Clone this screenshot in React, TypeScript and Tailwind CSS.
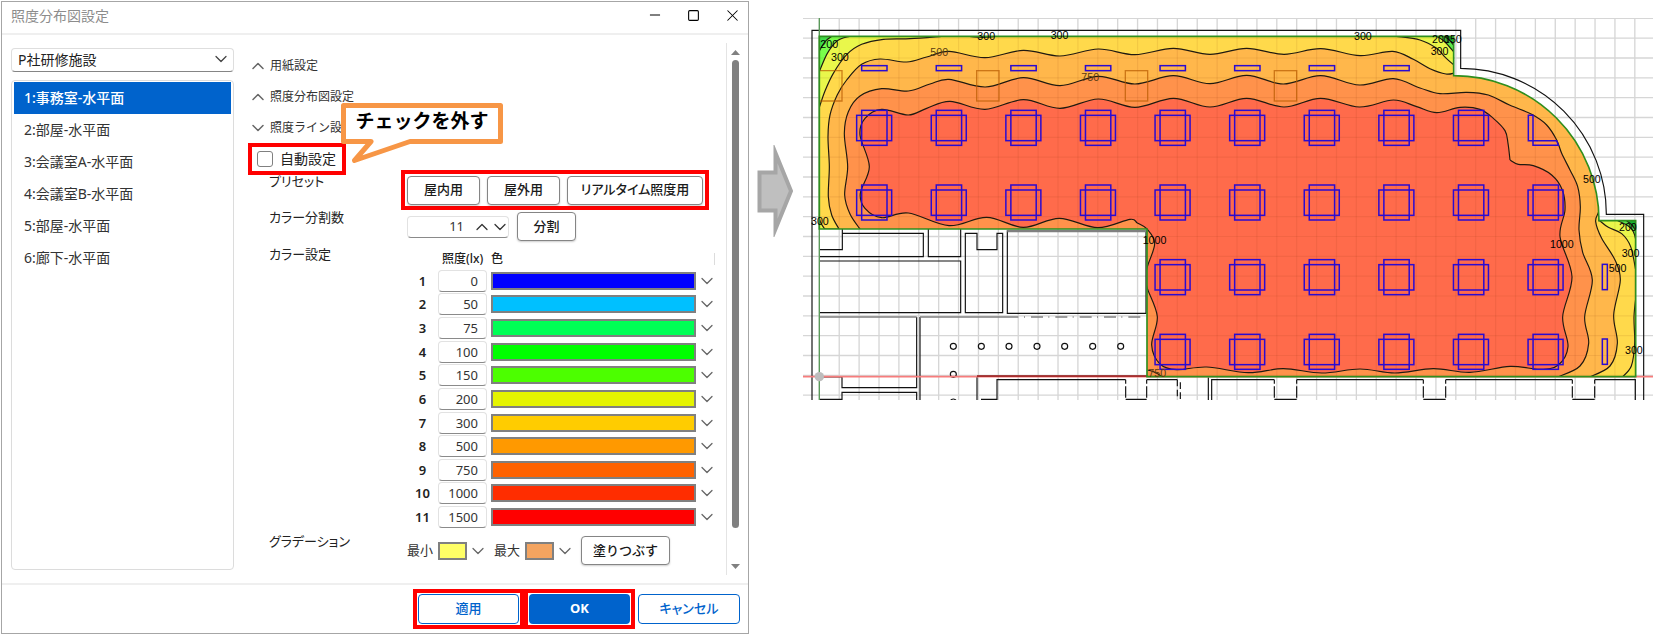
import { useState } from "react";
import { ChevronDown, ChevronUp, Minus, Square, X } from "lucide-react";

const rooms = [
  "1:事務室-水平面",
  "2:部屋-水平面",
  "3:会議室A-水平面",
  "4:会議室B-水平面",
  "5:部屋-水平面",
  "6:廊下-水平面",
];

const sections = [
  { label: "用紙設定", open: false },
  { label: "照度分布図設定", open: false },
  { label: "照度ライン設定", open: true },
];

const levels = [
  { lux: 0, color: "bg-[#0000ff]" },
  { lux: 50, color: "bg-[#00c0ff]" },
  { lux: 75, color: "bg-[#00ff55]" },
  { lux: 100, color: "bg-[#00ff00]" },
  { lux: 150, color: "bg-[#4cff00]" },
  { lux: 200, color: "bg-[#e5f400]" },
  { lux: 300, color: "bg-[#ffcc00]" },
  { lux: 500, color: "bg-[#ff9900]" },
  { lux: 750, color: "bg-[#ff6200]" },
  { lux: 1000, color: "bg-[#ff2d00]" },
  { lux: 1500, color: "bg-[#ff0000]" },
];

const outlineButton =
  "h-[29px] rounded-[4px] border border-[#858585] bg-white text-[13px] font-medium text-[#1a1a1a] shadow-[0_1px_2px_rgba(0,0,0,0.2)]";
const fieldBox =
  "rounded-[4px] border border-[#e2e2e2] border-b-[#8a8a8a] bg-white text-[13px] text-[#333]";

type Point = [number, number];

// Smooth curve that passes through every point
function smooth(points: Point[]) {
  let d = `${points[0][0]} ${points[0][1]}`;
  for (let i = 0; i < points.length - 1; i++) {
    const p0 = points[i - 1] ?? points[i];
    const p1 = points[i];
    const p2 = points[i + 1];
    const p3 = points[i + 2] ?? p2;
    const c1 = [p1[0] + (p2[0] - p0[0]) / 6, p1[1] + (p2[1] - p0[1]) / 6];
    const c2 = [p2[0] - (p3[0] - p1[0]) / 6, p2[1] - (p3[1] - p1[1]) / 6];
    d += ` C${c1[0]} ${c1[1]} ${c2[0]} ${c2[1]} ${p2[0]} ${p2[1]}`;
  }
  return d;
}

const line500Top = smooth([
  [267, 657], [245, 615], [235, 560], [238, 470], [234, 380], [240, 315], [262, 254], [290, 210],
  [335, 163], [390, 147], [470, 156], [530, 141], [597, 124], [705, 143], [820, 121], [930, 138],
  [1045, 117], [1155, 134], [1270, 115], [1380, 133], [1490, 115], [1602, 133], [1712, 116],
  [1830, 137], [1928, 124], [1990, 148], [2040, 176], [2088, 192], [2113, 189],
]);
const line500Right = smooth([
  [2546, 606], [2537, 635], [2555, 685], [2595, 750], [2611, 810], [2591, 915], [2602, 1000],
  [2580, 1068], [2516, 1102],
]);
const line750 = smooth([
  [332, 660], [300, 612], [284, 555], [293, 470], [283, 370], [295, 305], [330, 258], [395, 236],
  [475, 243], [540, 222], [597, 208], [706, 231], [820, 203], [930, 227], [1045, 199], [1155, 222],
  [1270, 197], [1380, 221], [1490, 196], [1600, 222], [1712, 197], [1828, 225], [1930, 206],
  [2010, 234], [2070, 251], [2150, 247], [2215, 255], [2280, 286], [2345, 313], [2390, 345],
  [2420, 390], [2435, 430], [2460, 480], [2483, 530], [2491, 590], [2487, 660], [2498, 727],
  [2527, 810], [2504, 920], [2516, 1000], [2490, 1068], [2420, 1102],
]);
const line1000 = smooth([
  [2280, 450], [2305, 463], [2350, 467], [2405, 495], [2437, 540], [2445, 600], [2430, 680],
  [2466, 800], [2438, 920], [2454, 1010], [2425, 1065], [2370, 1078], [2280, 1069], [2160, 1087],
  [2050, 1076], [1935, 1089], [1830, 1077], [1715, 1089], [1600, 1076], [1495, 1088], [1370, 1071],
  [1280, 1079], [1230, 1062], [1205, 1005], [1222, 920], [1192, 835], [1186, 802], [1192, 770],
  [1214, 700], [1191, 657], [1162, 639], [1140, 628], [1043, 653], [928, 625], [820, 652],
  [710, 622], [597, 647], [475, 609], [395, 623], [345, 595], [331, 550], [358, 470], [330, 375],
  [345, 325], [395, 298], [475, 315], [530, 295], [600, 274], [705, 298], [820, 269], [930, 295],
  [1045, 267], [1155, 292], [1270, 265], [1380, 291], [1490, 265], [1602, 291], [1712, 265],
  [1828, 291], [1930, 270], [2000, 290], [2060, 308], [2130, 292], [2190, 298], [2230, 325],
  [2265, 362], [2274, 400], [2280, 450],
]);

const roomOutline = "M208 79H2111V197A435 435 0 0 1 2547 632H2657V1100H1191V657H208Z";

const fixtureColumns = [0, 1, 2, 3, 4, 5, 6, 7, 8, 9];
const fixtureRows = [
  { y: 301, from: 0, to: 8 },
  { y: 525, from: 0, to: 9 },
  { y: 749, from: 4, to: 9 },
  { y: 973, from: 4, to: 9 },
];

const contourLabels = [
  { text: "200", x: 211, y: 114 },
  { text: "300", x: 243, y: 152 },
  { text: "500", x: 541, y: 138, faint: true },
  { text: "300", x: 682, y: 90 },
  { text: "300", x: 902, y: 86 },
  { text: "750", x: 994, y: 212, faint: true },
  { text: "300", x: 1812, y: 90 },
  { text: "200", x: 2046, y: 98 },
  { text: "150", x: 2082, y: 100 },
  { text: "300", x: 2042, y: 136 },
  { text: "500", x: 2499, y: 520 },
  { text: "200", x: 2607, y: 663 },
  { text: "300", x: 2615, y: 740 },
  { text: "500", x: 2576, y: 786 },
  { text: "1000", x: 2400, y: 715 },
  { text: "300", x: 2625, y: 1033 },
  { text: "300", x: 183, y: 644 },
  { text: "1000", x: 1178, y: 701 },
  { text: "750", x: 1195, y: 1102, faint: true },
];

function GridLines() {
  return (
    <>
      {Array.from({ length: 43 }, (_, i) => (
        <path key={`v${i}`} d={`M${208 + i * 59.67} 24V1170`} />
      ))}
      {Array.from({ length: 20 }, (_, i) => (
        <path key={`h${i}`} d={`M159 ${25 + i * 59.5}H2709`} />
      ))}
    </>
  );
}

function Fixture({ x, y }: { x: number; y: number }) {
  return (
    <>
      <rect x={x} y={y} width="76" height="105" />
      <rect x={x - 15} y={y + 15} width="105" height="76" />
    </>
  );
}

function FloorPlan() {
  return (
    <svg
      viewBox="159 24 2550 1146"
      className="block h-auto w-full"
      role="img"
      aria-label="照度分布図"
    >
      <defs>
        <clipPath id="room">
          <path d={roomOutline} />
        </clipPath>
      </defs>

      <g stroke="#d6d6d6" strokeWidth="4" fill="none">
        <GridLines />
      </g>

      {/* walls */}
      <g stroke="#111" strokeWidth="3.5" fill="none">
        <path d="M186 1170V61H2132V175A437 437 0 0 1 2569 613H2681V1170" />
        <path d="M277 657V719H209M277 670H520V740H209M535 657V740H632V657M209 753H632V908H209" />
        <path d="M646 670H681V719H741V670H758V908H646Z" />
        <path d="M772 661V910H1188V661" />
        <path d="M500 921V1133H276V1101H209M510 1170V921M209 1168H276V1147H500V1170" />
        <path d="M681 1170V1100M693 1168H741V1109H1127M1190 1109H1282" />
        <path d="M1385 1170V1109H1573M1640 1109H2020M2087 1109H2467M2534 1109H2656V1170" />
        <path d="M1375 1102V1170M1127 1168H1190M1573 1168H1640M2020 1168H2087M2467 1168H2534" />
        <path
          d="M1127 1109V1168M1190 1109V1168M1573 1109V1168M1640 1109V1168M2020 1109V1168M2087 1109V1168M2467 1109V1168M2534 1109V1168"
          strokeDasharray="12 8 34 6"
        />
        <path d="M1282 1109V1160M1291 1117V1170" strokeDasharray="20 10" />
        {[610, 694, 777, 861, 944, 1028, 1112].map((x) => (
          <circle key={x} cx={x} cy="1009" r="9" />
        ))}
        <circle cx="610" cy="1093" r="9" />
        <circle cx="610" cy="1176" r="9" />
      </g>
      <g stroke="#808080" fill="none">
        <path d="M772 663H1188" strokeWidth="8" />
        <path d="M209 921H500M510 921H805" strokeWidth="5" />
        <path d="M822 921H1172" strokeWidth="5" strokeDasharray="3 18 36 16" />
      </g>

      {/* axes */}
      <path d="M159 1100H2709" stroke="#f77c7c" strokeWidth="5" />
      <path d="M681 1098H1191" stroke="#8f1414" strokeWidth="4" />
      <path d="M208 24V1170" stroke="#5a9a5a" strokeWidth="4" />

      {/* lux bands, from dark to bright */}
      <g clipPath="url(#room)" stroke="#1f1a10" strokeWidth="3.5">
        <path d={roomOutline} fill="#ffd94b" />
        <path
          d={`M${smooth([[575, 79], [480, 86], [400, 88], [335, 103], [290, 134], [250, 190], [225, 243], [207, 295]])} L200 70Z`}
          fill="#e9f74b"
        />
        <path d={`M${smooth([[298, 79], [262, 92], [232, 130], [207, 187]])} L200 70Z`} fill="#78ff4b" />
        <path d={`M${smooth([[245, 79], [224, 96], [207, 125]])} L200 70Z`} fill="#3fe04b" />
        <path d="M645 78Q698 86 750 78" fill="none" />
        <path d={`M${smooth([[207, 622], [213, 640], [226, 660]])} L200 665Z`} fill="#e9f74b" />
        <path
          d={`M${smooth([[1940, 79], [2010, 90], [2060, 115], [2086, 142], [2113, 166]])} L2120 70Z`}
          fill="#e9f74b"
        />
        <path d={`M${smooth([[2060, 78], [2085, 96], [2113, 128]])} L2120 70Z`} fill="#5fe84b" />
        <path d={`M${smooth([[2082, 78], [2098, 90], [2113, 108]])} L2120 70Z`} fill="#14b432" />
        <path
          d={`M${smooth([[2548, 631], [2575, 652], [2615, 671], [2642, 710], [2658, 785]])} L2670 620Z`}
          fill="#e9f74b"
        />
        <path d={`M${smooth([[2600, 631], [2632, 646], [2650, 665], [2658, 692]])} L2670 620Z`} fill="#5fe84b" />
        <path d={`M${smooth([[2628, 631], [2646, 645], [2658, 664]])} L2670 620Z`} fill="#14b432" />
        <path
          d={`M${smooth([[2659, 850], [2652, 920], [2654, 1000], [2644, 1068], [2616, 1102]])} L2670 1110Z`}
          fill="#f4ea4b"
        />
        <path
          d={`M${line500Top} L2130 150 L2700 150 L2560 600 L${line500Right} L2516 1110 L1180 1110 L1180 665 L267 665Z`}
          fill="#ffb74b"
        />
        <path d={`M${line750} L2420 1110 L1180 1110 L1180 665 L332 665Z`} fill="#ff924b" />
        <path d={`M${line1000}`} fill="#ff6b4b" />
        <path d="M1192 1080Q1212 1082 1235 1100" fill="none" />
        <g stroke="#7a3000" strokeOpacity="0.09" fill="none">
          <GridLines />
        </g>
      </g>

      {/* columns */}
      <g stroke="#b85a00" strokeOpacity="0.7" strokeWidth="4" fill="none">
        {[680, 1126, 1573].map((x) => (
          <rect key={x} x={x} y="182" width="67" height="91" />
        ))}
        <path d="M208 182H276V273H208" />
      </g>

      <path d={roomOutline} fill="none" stroke="#2f8f1f" strokeWidth="5" />

      {/* fixtures */}
      <g stroke="#2a0ad2" strokeWidth="4.5" fill="none">
        {fixtureRows.map((row) =>
          fixtureColumns
            .filter((col) => col >= row.from && col <= row.to)
            .map((col) => <Fixture key={`${row.y}-${col}`} x={335 + col * 223.8} y={row.y} />)
        )}
        {fixtureColumns.slice(0, 8).map((col) => (
          <rect key={col} x={335 + col * 223.8} y="167" width="76" height="15" />
        ))}
        <path d="M2335 316H2349V392H2335ZM2349 392H2420L2425 406H2349Z" />
        <rect x="2557" y="763" width="15" height="76" />
        <rect x="2557" y="987" width="15" height="76" />
      </g>

      <circle cx="208" cy="1100" r="14" fill="#bdbdbd" />

      <g fontFamily="'Liberation Sans', Arial, sans-serif" fontSize="32">
        {contourLabels.map((label) => (
          <text key={`${label.x}-${label.y}`} x={label.x} y={label.y} fill={label.faint ? "#5a3a10" : "#000"}>
            {label.text}
          </text>
        ))}
      </g>
    </svg>
  );
}

function Callout() {
  return (
    <div className="absolute bottom-3 left-[93px] z-10 h-[60px] w-[162px]">
      <svg viewBox="0 0 162 60" className="absolute inset-0 h-full w-full" aria-hidden="true">
        <path
          d="M2.5 2.5H159.5V38.5H69L13.500 57.500L30 38.500H2.500Z"
          fill="#fff"
          stroke="#f79646"
          strokeWidth="5"
          strokeLinejoin="round"
        />
      </svg>
      <p className="relative pt-1 text-center text-[19px] leading-7 font-bold whitespace-nowrap text-black">
        チェックを外す
      </p>
    </div>
  );
}

function ColorPick({ label, color }: { label: string; color: string }) {
  return (
    <div className="flex items-center">
      <span className="w-[31px] text-[13px] whitespace-nowrap text-[#333]">{label}</span>
      <button
        type="button"
        aria-label={`${label}の色`}
        className={`h-[18px] w-[29px] border-2 border-[#808080] ${color}`}
      />
      <button type="button" aria-label={`${label}の色を選択`} className="ml-[1px] text-[#666]">
        <ChevronDown size={20} strokeWidth={1.5} />
      </button>
    </div>
  );
}

function SettingsDialog() {
  const [room, setRoom] = useState(rooms[0]);
  const [auto, setAuto] = useState(false);

  return (
    <section className="ml-px flex min-w-0 flex-col border border-[#a6a6a6] bg-white">
      <header className="flex h-[33px] items-center border-b-2 border-[#efefef] pl-[9px] text-[#8c8c8c]">
        <h1 className="pb-1 text-[14px]">照度分布図設定</h1>
        <div className="-mr-1 mb-[5px] ml-auto flex text-black">
          <button type="button" aria-label="最小化" className="flex h-5 w-[39px] items-center justify-center">
            <Minus size={16} strokeWidth={1.5} />
          </button>
          <button type="button" aria-label="最大化" className="flex h-5 w-[39px] items-center justify-center">
            <Square size={13} strokeWidth={2} />
          </button>
          <button type="button" aria-label="閉じる" className="flex h-5 w-[39px] items-center justify-center">
            <X size={19} strokeWidth={1.3} />
          </button>
        </div>
      </header>

      <div className="flex">
        <div className="ml-[9px] flex w-[223px] shrink-0 flex-col gap-2 pt-3 pb-[13px]">
          <div className="relative">
            <select
              aria-label="施設"
              className="h-6 w-full appearance-none rounded-[4px] border border-[#dedede] border-b-[#858585] bg-white pl-[6px] text-[14px] text-[#222]"
            >
              <option>P社研修施設</option>
            </select>
            <ChevronDown
              size={20}
              strokeWidth={1.5}
              className="pointer-events-none absolute top-0.5 right-[3px] text-[#444]"
            />
          </div>
          <ul className="flex-1 rounded-[4px] border border-[#dcdcdc] px-[2px] py-[1px]">
            {rooms.map((name) => (
              <li key={name}>
                <button
                  type="button"
                  onClick={() => setRoom(name)}
                  className={`block h-8 w-full pl-[10px] text-left text-[14px] ${
                    name === room ? "bg-[#0063cc] font-medium text-white" : "text-[#333]"
                  }`}
                >
                  {name}
                </button>
              </li>
            ))}
          </ul>
        </div>

        <div className="min-w-0 flex-1 pt-[15px] pb-[18px] pl-[14px]">
          {sections.map((section) => (
            <button
              key={section.label}
              type="button"
              aria-expanded={section.open}
              className="flex h-[31px] w-full items-center gap-[2px] text-[12px] text-[#333]"
            >
              {section.open ? (
                <ChevronDown size={20} strokeWidth={1.8} className="text-[#666]" />
              ) : (
                <ChevronUp size={20} strokeWidth={1.8} className="text-[#666]" />
              )}
              {section.label}
            </button>
          ))}

          <div className="relative">
            <label className="relative z-10 flex h-8 w-[98px] items-center gap-[7px] border-4 border-[#ff0000] bg-white pl-[5px] text-[14px] leading-5 whitespace-nowrap text-[#222]">
              <input
                type="checkbox"
                checked={auto}
                onChange={(e) => setAuto(e.target.checked)}
                className="h-4 w-4 shrink-0 appearance-none rounded-[3px] border-[1px] border-[#808080] bg-white checked:bg-[#0063cc]"
              />
              自動設定
            </label>
            <Callout />
          </div>

          <div className="-mt-[5px] flex flex-col gap-[2px] pl-[21px] text-[13px] text-[#222]">
            <div className="flex">
              <p className="w-[132px] shrink-0 pt-[2px] [font-feature-settings:'palt']">プリセット</p>
              <div className="flex h-10 items-center gap-[7px] border-4 border-[#ff0000] px-[2px]">
                <button type="button" className={`${outlineButton} w-[73px]`}>屋内用</button>
                <button type="button" className={`${outlineButton} w-[73px]`}>屋外用</button>
                <button type="button" className={`${outlineButton} w-[136px] [font-feature-settings:'palt']`}>
                  リアルタイム照度用
                </button>
              </div>
            </div>

            <div className="flex h-[30px]">
              <label htmlFor="divisions" className="w-[138px] shrink-0 -mt-1 [font-feature-settings:'palt']">
                カラー分割数
              </label>
              <div className={`${fieldBox} mt-1 flex h-[22px] w-[102px] items-center`}>
                <input id="divisions" defaultValue="11" className="w-14 text-right outline-none" />
                <button type="button" aria-label="増やす" className="ml-2">
                  <ChevronUp size={20} strokeWidth={1.5} />
                </button>
                <button type="button" aria-label="減らす" className="-ml-[2px]">
                  <ChevronDown size={20} strokeWidth={1.5} />
                </button>
              </div>
              <button type="button" className={`${outlineButton} ml-2 w-[59px]`}>分割</button>
            </div>

            <div className="flex">
              <p className="w-[138px] shrink-0 pt-[1px] [font-feature-settings:'palt']">カラー設定</p>
              <table className="mt-[5px] h-[280px] w-[311px] table-fixed border-collapse">
                <thead>
                  <tr className="h-5 text-left text-[12px] leading-4">
                    <th className="w-[31px] p-0" aria-label="番号" />
                    <th className="w-[53px] p-0 pl-1 font-medium whitespace-nowrap">照度(lx)</th>
                    <th className="p-0 font-medium">色</th>
                    <th className="w-[22px] p-0" aria-label="色の選択">
                      <span className="ml-[18px] block h-3 w-px bg-[#dcdcdc]" />
                    </th>
                  </tr>
                </thead>
                <tbody>
                  {levels.map((level, i) => (
                    <tr key={level.lux}>
                      <td className="p-0 text-center leading-5 font-semibold">{i + 1}</td>
                      <td className="p-0">
                        <input
                          aria-label={`照度 ${i + 1}`}
                          defaultValue={level.lux}
                          className={`${fieldBox} block h-[22px] w-[49px] pr-2 text-right outline-none`}
                        />
                      </td>
                      <td className="p-0">
                        <button
                          type="button"
                          aria-label={`色 ${i + 1}`}
                          className={`block h-[18px] w-full border-2 border-[#808080] ${level.color}`}
                        />
                      </td>
                      <td className="p-0">
                        <button type="button" aria-label={`色 ${i + 1} を選択`} className="ml-[1px] block text-[#666]">
                          <ChevronDown size={20} strokeWidth={1.5} />
                        </button>
                      </td>
                    </tr>
                  ))}
                </tbody>
              </table>
            </div>

            <div className="flex pt-[1px]">
              <p className="w-[138px] shrink-0 [font-feature-settings:'palt']">グラデーション</p>
              <div className="flex items-center gap-[6px] pt-1">
                <ColorPick label="最小" color="bg-[#ffff66]" />
                <ColorPick label="最大" color="bg-[#f4a460]" />
                <button type="button" className={`${outlineButton} w-[89px]`}>塗りつぶす</button>
              </div>
            </div>
          </div>
        </div>

        <div className="my-2 mr-[2px] flex w-5 shrink-0 flex-col items-center border-l border-[#e4e4e4] pt-[7px] pr-[2px]">
          <svg viewBox="0 0 9 5" className="h-[5px] w-[9px]" aria-hidden="true">
            <path d="M0 5L4.500 0L9 5Z" fill="#808080" />
          </svg>
          <div className="mt-[5px] mb-9 w-[7px] flex-1 rounded-full bg-[#808080]" />
          <svg viewBox="0 0 9 5" className="mb-[6px] h-[5px] w-[9px]" aria-hidden="true">
            <path d="M0 0L4.500 5L9 0Z" fill="#808080" />
          </svg>
        </div>
      </div>

      <footer className="flex items-center justify-end border-t-2 border-[#efefef] py-1 pr-2 text-[13px] font-medium">
        <div className="border-4 border-[#ff0000] p-[1px]">
          <button type="button" className="h-[30px] w-[101px] rounded-[4px] border border-[#0063cc] bg-white text-[#0063cc]">
            適用
          </button>
        </div>
        <div className="border-4 border-[#ff0000] p-[1px]">
          <button type="button" className="h-[30px] w-[101px] rounded-[4px] bg-[#0063cc] font-bold text-white">
            OK
          </button>
        </div>
        <button
          type="button"
          className="ml-[3px] h-[30px] w-[102px] rounded-[4px] border border-[#0063cc] bg-white text-[#0063cc] [font-feature-settings:'palt']"
        >
          キャンセル
        </button>
      </footer>
    </section>
  );
}

export default function App() {
  return (
    <main className="grid grid-cols-[749fr_54fr_850fr] items-start bg-white pt-px font-['Noto_Sans','Noto_Sans_CJK_JP',sans-serif]">
      <SettingsDialog />
      <svg viewBox="0 0 54 92" className="mt-36 w-full" aria-hidden="true">
        <path
          d="M10.500 27.500H26.500V8L42 46L26.500 84V65.500H10.500Z"
          fill="#bfbfbf"
          stroke="#a6a6a6"
          strokeWidth="4"
          strokeMiterlimit="10"
        />
      </svg>
      <div className="mt-[17px] min-w-0">
        <FloorPlan />
      </div>
    </main>
  );
}
